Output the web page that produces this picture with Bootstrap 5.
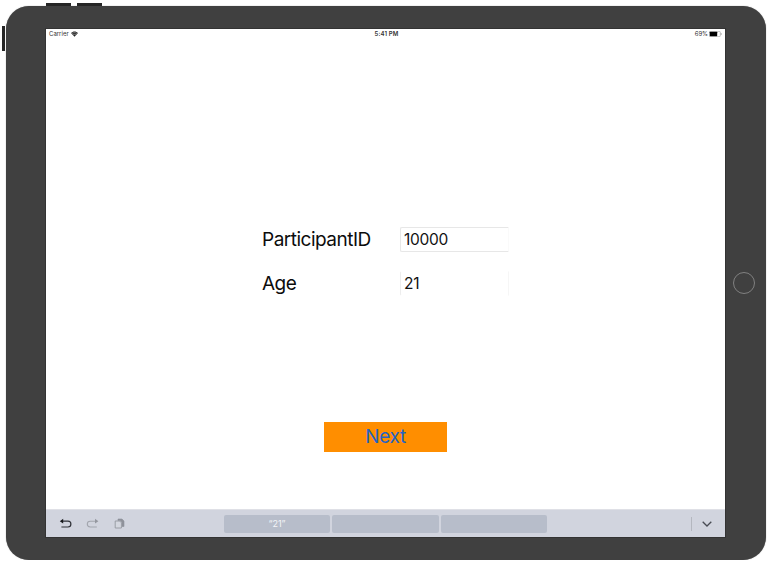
<!DOCTYPE html>
<html lang="en">
<head>
<meta charset="utf-8">
<meta name="viewport" content="width=device-width, initial-scale=1">
<title>Participant</title>
<link href="https://cdn.jsdelivr.net/npm/bootstrap@5.3.0/dist/css/bootstrap.min.css" rel="stylesheet">
<style>
body{font-family:Inter,"Liberation Sans",sans-serif;color:#111;background:#fff;overflow:hidden}
.tablet{width:760.5px;height:554px;margin:6px 0 0 5.5px;padding:23px 0 0 40.5px;background:#404040;border-radius:23px;box-shadow:0 0 1px 0 #777}
.side-key{position:absolute;background:#262626}
.key-a{left:46px;top:3px;width:25px;height:3px}
.key-b{left:77px;top:3px;width:25px;height:3px}
.key-c{left:2px;top:26px;width:3px;height:25px}
.display{width:679px;height:508px;outline:1px solid #333}
.status{height:10px;padding:0 3px 0 3px;font-size:6px;line-height:10px;color:#333}
.status>div{flex:1 1 0}
.wifi{margin-left:2px}
.battery{margin-left:1px}
.clock{font-weight:600;letter-spacing:.12px;padding-left:2px}
.main-form{width:247px;margin:188px 0 0 216px}
.field-name{width:138px;font-size:19px;line-height:26px;letter-spacing:-.5px;color:#0c0c0c}
.form-control.entry{width:109px;height:25px;min-height:0;padding:0 0 0 3px;margin-top:-1px;font-size:15.5px;line-height:23px;letter-spacing:-.3px;color:#111;border:1px solid #e7e7e7;border-right-color:#fafafa;border-radius:2px 0 0 2px}
.form-control.entry.faded{border-color:#fff #f6f6f6 #fff #ededed}
.fields{gap:18px}
.btn.next{width:123px;height:30px;margin:125px 0 0 278px;padding:0;border:0;border-radius:0;background:#ff8e00;color:#2463c4;font-size:19px;line-height:30px;letter-spacing:-.3px}
.assist{height:28px;background:#d1d4de;border-top:1px solid #dfe0e6;padding:0 12px 0 13px}
.assist-icons{width:165px;gap:13px}
.hints{gap:2px}
.hint{height:18px;width:107px;background:#b7bdca;border-radius:2px;color:#f4f5f8;font-size:9px;line-height:18px}
.hint:first-child,.hint:last-child{width:106px}
.rule{width:1px;height:14px;background:#b4b7bf;margin-right:9px}
.home{position:absolute;left:733px;top:272px;width:22px;height:22px;border:1.5px solid #808080}
</style>
<script src="https://cdn.jsdelivr.net/npm/bootstrap@5.3.0/dist/js/bootstrap.bundle.min.js"></script>
</head>
<body>
<div class="side-key key-a"></div><div class="side-key key-b"></div><div class="side-key key-c"></div>
<div class="overflow-hidden">
<div class="tablet">
  <div class="display bg-white d-flex flex-column">
    <div class="status d-flex align-items-center">
      <div class="d-flex align-items-center">Carrier
        <svg class="wifi" width="7" height="6" viewBox="0 0 14 11"><path d="M0 3.5C4-.8 10-.8 14 3.5L7 11Z" fill="#222"/><path d="M1.6 5.1C5 2 9 2 12.4 5.1M4 7.5c2-1.8 4-1.8 6 0" fill="none" stroke="#fff" stroke-width=".8"/></svg>
      </div>
      <div class="clock text-center">5:41 PM</div>
      <div class="d-flex align-items-center justify-content-end">69%
        <svg class="battery" width="13" height="6" viewBox="0 0 13 6"><rect x=".3" y=".3" width="11" height="5.4" rx="1" fill="#fff" stroke="#999" stroke-width=".6"/><rect x=".8" y=".8" width="7.4" height="4.4" rx=".4" fill="#000"/><path d="M12.2 2v2" stroke="#999" stroke-width=".7"/></svg>
      </div>
    </div>
    <form class="main-form">
      <div class="fields d-flex flex-column">
        <div class="d-flex align-items-center"><label class="field-name" for="pid">ParticipantID</label><input id="pid" class="form-control entry" value="10000"></div>
        <div class="d-flex align-items-center"><label class="field-name" for="age">Age</label><input id="age" class="form-control entry faded" value="21"></div>
      </div>
    </form>
    <button type="button" class="btn next">Next</button>
    <div class="assist mt-auto d-flex align-items-center">
      <div class="assist-icons d-flex align-items-center">
        <svg width="14" height="14" viewBox="0 0 14 14"><path d="M3 4.2h6a2.9 2.9 0 0 1 0 5.8H2.4" fill="none" stroke="#303238" stroke-width="1.2"/><path d="M.8 4.2l3.4-2.4v4.8z" fill="#17181b"/></svg>
        <svg width="14" height="14" viewBox="0 0 14 14"><path d="M10.2 4.2h-6a2.9 2.9 0 0 0 0 5.8h6.6" fill="none" stroke="#a2a5ad" stroke-width="1.1"/><path d="M12.4 4.2L9 1.8v4.8z" fill="#94979f"/></svg>
        <svg width="14" height="14" viewBox="0 0 14 14"><path d="M5 2h4l2 2v5.5H9V5.5L7 3.6H5z" fill="#8f929a" stroke="#8f929a" stroke-width=".6"/><path d="M2.2 4h4.4l1.8 1.8v5.2H2.2z" fill="#d4d7df" stroke="#94979f" stroke-width=".9"/></svg>
      </div>
      <div class="hints d-flex">
        <div class="hint text-center">“21”</div><div class="hint"></div><div class="hint"></div>
      </div>
      <div class="ms-auto d-flex align-items-center">
        <div class="rule"></div>
        <svg width="12" height="12" viewBox="0 0 12 12"><path d="M1.7 3.8L6 8l4.3-4.2" fill="none" stroke="#484b53" stroke-width="1.3"/></svg>
      </div>
    </div>
  </div>
</div>
</div>
<div class="home rounded-circle"></div>
</body>
</html>
